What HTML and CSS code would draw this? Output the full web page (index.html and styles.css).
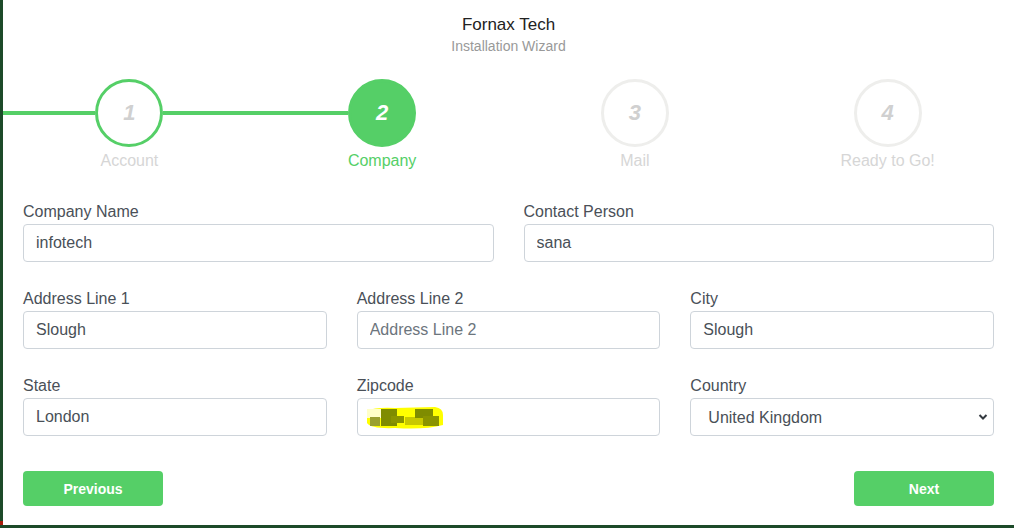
FILE: index.html
```html
<!DOCTYPE html>
<html lang="en">
<head>
    <meta charset="UTF-8">
    <meta name="viewport" content="width=device-width, initial-scale=1.0">
    <title>Fornax Tech - Installation Wizard</title>
    <link rel="stylesheet" href="styles.css">
</head>
<body>
    <div class="wizard">
        <!-- Cabeçalho -->
        <div class="wizard-header">
            <h3 class="wizard-title">Fornax Tech</h3>
            <p class="wizard-subtitle">Installation Wizard</p>
        </div>

        <!-- Passos -->
        <div class="steps">
            <div class="step done">
                <div class="step-row">
                    <span class="seg on"></span>
                    <span class="circle">1</span>
                    <span class="seg on"></span>
                </div>
                <div class="step-label">Account</div>
            </div>
            <div class="step active">
                <div class="step-row">
                    <span class="seg on"></span>
                    <span class="circle">2</span>
                    <span class="seg"></span>
                </div>
                <div class="step-label">Company</div>
            </div>
            <div class="step">
                <div class="step-row">
                    <span class="seg"></span>
                    <span class="circle">3</span>
                    <span class="seg"></span>
                </div>
                <div class="step-label">Mail</div>
            </div>
            <div class="step">
                <div class="step-row">
                    <span class="seg"></span>
                    <span class="circle">4</span>
                    <span class="seg"></span>
                </div>
                <div class="step-label">Ready to Go!</div>
            </div>
        </div>

        <!-- Formulário -->
        <form class="wizard-form">
            <div class="form-row cols-2">
                <div class="form-group">
                    <label for="company">Company Name</label>
                    <input type="text" id="company" class="form-control" value="infotech">
                </div>
                <div class="form-group">
                    <label for="contact">Contact Person</label>
                    <input type="text" id="contact" class="form-control" value="sana">
                </div>
            </div>
            <div class="form-row cols-3">
                <div class="form-group">
                    <label for="addr1">Address Line 1</label>
                    <input type="text" id="addr1" class="form-control" value="Slough">
                </div>
                <div class="form-group">
                    <label for="addr2">Address Line 2</label>
                    <input type="text" id="addr2" class="form-control" placeholder="Address Line 2">
                </div>
                <div class="form-group">
                    <label for="city">City</label>
                    <input type="text" id="city" class="form-control" value="Slough">
                </div>
            </div>
            <div class="form-row cols-3">
                <div class="form-group">
                    <label for="state">State</label>
                    <input type="text" id="state" class="form-control" value="London">
                </div>
                <div class="form-group">
                    <label>Zipcode</label>
                    <div class="form-control zip">
                        <!-- valor borrado -->
                        <svg class="blur" width="80" height="24" viewBox="0 0 80 24">
                            <path d="M2 6 Q10 2 30 3 L70 2 Q78 3 78 10 L78 20 Q60 25 30 23 Q6 24 2 18 Z" fill="#ffff00"/>
                            <rect x="2" y="4" width="16" height="9" fill="#ffffc8"/>
                            <rect x="5" y="12" width="10" height="9" fill="#9aa030"/>
                            <rect x="16" y="4" width="16" height="17" fill="#7f8c00"/>
                            <rect x="26" y="11" width="13" height="7" fill="#8a9400"/>
                            <rect x="40" y="12" width="26" height="8" fill="#c8c800"/>
                            <rect x="50" y="4" width="18" height="9" fill="#7f8c00"/>
                            <rect x="58" y="11" width="16" height="10" fill="#8a9400"/>
                        </svg>
                    </div>
                </div>
                <div class="form-group">
                    <label for="country">Country</label>
                    <div class="select-wrap">
                        <select id="country" class="form-control">
                            <option>United Kingdom</option>
                        </select>
                        <svg class="chevron" width="10" height="8" viewBox="0 0 10 8">
                            <path d="M1.5 2 L5 5.5 L8.5 2" fill="none" stroke="#343a40" stroke-width="2"/>
                        </svg>
                    </div>
                </div>
            </div>

            <div class="wizard-footer">
                <button type="button" class="btn">Previous</button>
                <button type="button" class="btn">Next</button>
            </div>
        </form>
    </div>
</body>
</html>
```

FILE: styles.css
```css
/* Geral */
html {
    background: linear-gradient(to right, #a61d0b 240px, transparent 240px) left bottom / 100% 4px no-repeat, #1c4a29;
}

body {
    margin: 0;
    font-family: "Liberation Sans", Arial, sans-serif;
    color: #495057;
}

/* Cartão do assistente */
.wizard {
    margin-left: 3px;
    width: 1011px;
    height: 525px;
    background-color: #fff;
    box-sizing: border-box;
    padding-top: 15px;
}

.wizard-header {
    text-align: center;
}

.wizard-title {
    margin: 0;
    font-size: 17px;
    line-height: 20px;
    font-weight: normal;
    color: #222;
}

.wizard-subtitle {
    margin: 2px 0 0;
    font-size: 14px;
    line-height: 18px;
    color: #999;
}

/* Passos */
.steps {
    display: flex;
    margin-top: 24px;
}

.step {
    flex: 1;
    text-align: center;
}

.step-row {
    display: flex;
    align-items: center;
}

.seg {
    flex: 1;
    height: 4px;
}

.seg.on {
    background-color: #55cf67;
}

.circle {
    width: 68px;
    height: 68px;
    box-sizing: border-box;
    border: 3px solid #eeeeec;
    border-radius: 50%;
    display: flex;
    align-items: center;
    justify-content: center;
    font-size: 22px;
    font-weight: bold;
    font-style: italic;
    color: #d0d0d0;
    background-color: #fff;
}

.step.done .circle {
    border-color: #55cf67;
}

.step.active .circle {
    border-color: #55cf67;
    background-color: #55cf67;
    color: #fff;
}

.step-label {
    margin-top: 4px;
    font-size: 16px;
    line-height: 20px;
    color: #d6d6d6;
}

.step.active .step-label {
    color: #55cf67;
}

/* Formulário */
.wizard-form {
    padding: 0 20px;
    margin-top: 30px;
}

.form-row {
    display: grid;
    column-gap: 30px;
}

.cols-2 {
    grid-template-columns: 1fr 1fr;
}

.cols-3 {
    grid-template-columns: 1fr 1fr 1fr;
}

.form-group {
    margin-bottom: 26px;
}

.form-group label {
    display: block;
    font-size: 16px;
    line-height: 22px;
    margin-bottom: 1px;
    color: #4a5058;
}

.form-control {
    display: block;
    width: 100%;
    height: 38px;
    box-sizing: border-box;
    padding: 0 12px;
    font-family: "Liberation Sans", Arial, sans-serif;
    font-size: 16px;
    color: #495057;
    background-color: #fff;
    border: 1px solid #ced4da;
    border-radius: 4px;
    outline: none;
}

.form-control::placeholder {
    color: #6c757d;
}

.zip {
    display: flex;
    align-items: center;
    padding-left: 7px;
}

.select-wrap {
    position: relative;
}

select.form-control {
    appearance: none;
    padding-left: 17px;
}

.chevron {
    position: absolute;
    right: 6px;
    top: 15px;
}

/* Botões */
.wizard-footer {
    display: flex;
    justify-content: space-between;
    margin-top: 9px;
}

.btn {
    width: 140px;
    height: 35px;
    border: none;
    border-radius: 4px;
    background-color: #55cf67;
    color: #fff;
    font-family: "Liberation Sans", Arial, sans-serif;
    font-size: 14px;
    font-weight: bold;
    cursor: pointer;
}
```
